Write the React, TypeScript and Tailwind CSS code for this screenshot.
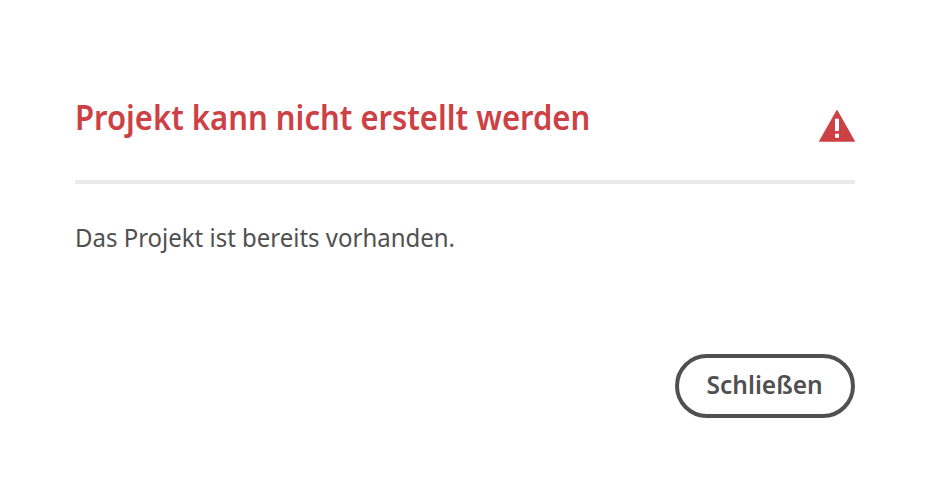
export default function App() {
  return (
    <main className="flex h-[497px] w-full flex-col bg-white pl-[75px] pr-[77px] pt-[93px] font-['Noto_Sans',sans-serif] text-[#505050]">
      <header className="flex h-[91px] items-start justify-between border-b-4 border-[#eaeaea]">
        <h1 className="origin-left scale-x-[0.912] whitespace-nowrap text-[34px] font-semibold leading-[48px] text-[#cd4044]">
          Projekt kann nicht erstellt werden
        </h1>
        <svg className="mt-[17px] h-8 w-9 shrink-0" viewBox="0 0 36 32" aria-hidden="true">
          <path d="M17.4.4q.6-.7 1.2 0L35.9 31q.2.8-.6.8H.7q-.8 0-.6-.8Z" fill="#cd4044" />
          <path d="M16 8.7h4v12.3h-4zM16 23.7h4v4h-4z" fill="white" />
        </svg>
      </header>
      <p className="mt-[33px] origin-left scale-x-[0.922] whitespace-nowrap text-[26px] leading-[40px]">
        Das Projekt ist bereits vorhanden.
      </p>
      <button className="mt-[97px] flex h-16 w-[180px] items-center justify-center self-end rounded-full border-4 border-[#505050] pb-1 text-[26px] font-semibold">
        <span className="scale-x-[0.943]">Schließen</span>
      </button>
    </main>
  );
}
